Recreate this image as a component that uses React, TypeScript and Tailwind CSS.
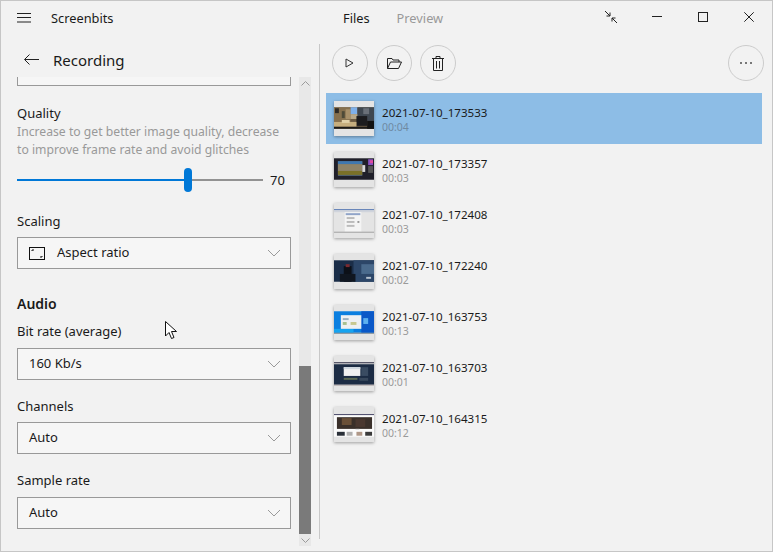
import React from "react";

const Chevron = () => (
  <svg width="14" height="8" viewBox="0 0 14 8" className="shrink-0" fill="none" stroke="#9a9a9a" strokeWidth="1">
    <path d="M1 1l6 6 6-6" />
  </svg>
);

function Select({ label, icon }: { label: string; icon?: boolean }) {
  return (
    <div className="flex h-8 w-[274px] items-center border border-[#999999] bg-[#f6f6f6] pl-[11px] pr-[9px]">
      {icon && (
        <svg width="17" height="13" viewBox="0 0 17 13" fill="none" className="mr-[11px] shrink-0" stroke="#111">
          <rect x="0.5" y="0.5" width="15" height="12" />
          <path d="M3 4V3h2M13 9v1h-2" />
        </svg>
      )}
      <span className="mb-[2px] flex-1 text-[13px] leading-none text-[#1a1a1a]">{label}</span>
      <Chevron />
    </div>
  );
}

function Label({ children, className = "" }: { children: React.ReactNode; className?: string }) {
  return <div className={"h-[18px] text-[13px] leading-[18px] text-[#1a1a1a] " + className}>{children}</div>;
}

function RoundBtn({ children, className = "" }: { children: React.ReactNode; className?: string }) {
  return (
    <button className={"flex h-9 w-9 items-center justify-center rounded-full border border-[#cccccc] " + className}>
      {children}
    </button>
  );
}

type T = { name: string; dur: string; art: React.ReactNode };

const Thumb = ({ art }: { art: React.ReactNode }) => (
  <div className="h-[35px] w-[40px] shrink-0 bg-[#e4e4e4] shadow-[0_1px_3px_rgba(0,0,0,0.35)]">
    <svg width="40" height="35" viewBox="0 0 41 35" className="block blur-[0.4px]">
      {art}
    </svg>
  </div>
);

const items: T[] = [
  {
    name: "2021-07-10_173533",
    dur: "00:04",
    art: (
      <>
        <rect y="6" width="41" height="22" fill="#6b5a42" />
        <rect x="0" y="6" width="17" height="15" fill="#86704e" />
        <rect x="1" y="7" width="4" height="5" fill="#2e2a26" />
        <rect x="8" y="10" width="3" height="7" fill="#4e4a38" />
        <rect x="12" y="8" width="5" height="10" fill="#a8906a" />
        <rect x="17" y="6" width="7" height="7" fill="#7eb0ea" />
        <rect x="17" y="13" width="8" height="5" fill="#b8a98a" />
        <rect x="24" y="6" width="17" height="14" fill="#3f4750" />
        <rect x="30" y="7" width="6" height="6" fill="#6a7078" />
        <rect x="23" y="15" width="11" height="10" fill="#1c1c1e" />
        <rect x="0" y="21" width="23" height="5" fill="#c6ae7e" />
        <rect x="8" y="19" width="8" height="3" fill="#e0d0a8" />
        <rect x="0" y="26" width="41" height="2" fill="#1c1a18" />
        <rect x="34" y="20" width="7" height="8" fill="#121212" />
      </>
    ),
  },
  {
    name: "2021-07-10_173357",
    dur: "00:03",
    art: (
      <>
        <rect y="6" width="41" height="22" fill="#20202a" />
        <rect x="4" y="9" width="25" height="15" fill="#5a6a78" />
        <rect x="4" y="9" width="25" height="3" fill="#3f78b0" />
        <rect x="4" y="12" width="25" height="7" fill="#8f8468" />
        <rect x="4" y="19" width="25" height="4" fill="#7a7028" />
        <rect x="29" y="13" width="3" height="7" fill="#d8d8d8" />
        <rect x="35" y="7" width="5" height="6" fill="#8a50c0" />
        <rect x="37" y="8" width="3" height="3" fill="#e04aa0" />
        <rect x="35" y="14" width="5" height="7" fill="#555" />
      </>
    ),
  },
  {
    name: "2021-07-10_172408",
    dur: "00:03",
    art: (
      <>
        <rect y="6" width="41" height="1" fill="#3a62a8" />
        <rect y="7" width="41" height="2" fill="#d0d4dc" />
        <rect x="11" y="9" width="17" height="20" fill="#f4f4f4" />
        <rect x="12" y="10" width="15" height="2" fill="#90a4c8" />
        <rect x="13" y="14" width="8" height="2" fill="#bbb" />
        <rect x="13" y="18" width="8" height="2" fill="#bbb" />
        <rect x="13" y="22" width="8" height="2" fill="#bbb" />
        <rect x="24" y="18" width="2" height="2" fill="#999" />
        <rect y="29" width="41" height="1" fill="#a0a0a0" />
      </>
    ),
  },
  {
    name: "2021-07-10_172240",
    dur: "00:02",
    art: (
      <>
        <rect y="6" width="41" height="22" fill="#1a2d48" />
        <rect x="20" y="6" width="21" height="22" fill="#2c4668" />
        <rect x="28" y="10" width="13" height="10" fill="#4a6a8c" />
        <rect x="10" y="12" width="8" height="16" fill="#0c1018" />
        <rect x="12" y="10" width="4" height="3" fill="#7a2a30" />
        <rect x="6" y="20" width="16" height="8" fill="#101620" />
        <rect x="33" y="23" width="5" height="2" fill="#b8c4d0" />
      </>
    ),
  },
  {
    name: "2021-07-10_163753",
    dur: "00:13",
    art: (
      <>
        <rect y="6" width="41" height="22" fill="#0b7fe0" />
        <rect x="28" y="6" width="13" height="22" fill="#0a58c8" />
        <rect y="24" width="20" height="4" fill="#16a4f0" />
        <rect x="7" y="10" width="21" height="14" fill="#eef0f2" />
        <rect x="9" y="13" width="6" height="2" fill="#9ab0c0" />
        <rect x="9" y="17" width="4" height="3" fill="#a8c090" />
        <rect x="17" y="17" width="6" height="3" fill="#c8c890" />
        <rect x="30" y="13" width="5" height="6" fill="#5cb0f0" />
        <rect y="28" width="41" height="1" fill="#70808c" />
      </>
    ),
  },
  {
    name: "2021-07-10_163703",
    dur: "00:01",
    art: (
      <>
        <rect y="6" width="41" height="1" fill="#202038" />
        <rect y="8" width="41" height="21" fill="#1c2c44" />
        <rect x="10" y="11" width="17" height="9" fill="#f0f0f0" />
        <rect x="10" y="11" width="17" height="2" fill="#d0d8e0" />
        <rect x="28" y="11" width="7" height="9" fill="#3a4c62" />
        <rect x="10" y="22" width="14" height="2" fill="#5c6a54" />
        <rect x="26" y="22" width="9" height="3" fill="#38485c" />
        <rect y="29" width="41" height="1" fill="#b0a8a8" />
      </>
    ),
  },
  {
    name: "2021-07-10_164315",
    dur: "00:12",
    art: (
      <>
        <rect y="7" width="41" height="1" fill="#22224a" />
        <rect y="8" width="41" height="22" fill="#fbfbfb" />
        <rect x="3" y="10" width="36" height="12" fill="#3a302a" />
        <rect x="8" y="11" width="10" height="7" fill="#6a5038" />
        <rect x="22" y="12" width="10" height="8" fill="#4a3830" />
        <rect x="22" y="22" width="4" height="1" fill="#ddd" />
        <rect x="3" y="25" width="8" height="4" fill="#2a3038" />
        <rect x="13" y="25" width="6" height="4" fill="#b0b0b0" />
        <rect x="23" y="25" width="6" height="4" fill="#b09888" />
        <rect x="32" y="25" width="7" height="4" fill="#3a3a3a" />
      </>
    ),
  },
];

export default function App() {
  return (
    <div
      className="relative flex h-[552px] w-[773px] flex-col overflow-hidden border border-[#c6c6c6] bg-[#f2f2f2] text-[#1a1a1a]"
      style={{ fontFamily: '"Noto Sans", "Open Sans", sans-serif' }}
    >
      {/* title bar */}
      <div className="flex h-[34px] shrink-0 items-center">
        <svg width="14" height="10" viewBox="0 0 14 10" className="ml-4 shrink-0" fill="none" stroke="#222">
          <path d="M0 .5h14M0 4.5h14M0 9h14" />
        </svg>
        <span className="ml-5 w-[292px] text-[12.8px] leading-none">Screenbits</span>
        <span className="text-[12.8px] leading-none">Files</span>
        <span className="ml-[27px] text-[12.8px] leading-none text-[#999999]">Preview</span>
        <div className="mb-[3px] ml-auto flex items-center pr-[18px]">
          <svg width="14" height="14" viewBox="0 0 14 14" fill="none" stroke="#222" className="mr-[34px]">
            <path d="M1 1l5 5M6 2.5V6H2.5M13 13L8 8M8 11.5V8h3.5" />
          </svg>
          <svg width="10" height="11" viewBox="0 0 10 11" fill="none" stroke="#222" className="mr-[36px]">
            <path d="M0 5.5h10" />
          </svg>
          <svg width="10" height="10" viewBox="0 0 10 10" fill="none" stroke="#222" className="mr-[36px]">
            <rect x="0.5" y="0.5" width="9" height="9" />
          </svg>
          <svg width="10" height="10" viewBox="0 0 10 10" fill="none" stroke="#222">
            <path d="M.3.3l9.4 9.4M9.7.3L.3 9.7" />
          </svg>
        </div>
      </div>

      {/* body */}
      <div className="flex min-h-0 flex-1">
        {/* left pane */}
        <div className="flex w-[318px] shrink-0 flex-col">
          <div className="flex h-[42px] shrink-0 items-center pl-[23px] pt-[6px]">
            <svg width="15" height="11" viewBox="0 0 15 11" fill="none" stroke="#222">
              <path d="M15 5.5H.8M5.5.5l-5 5 5 5" />
            </svg>
            <span className="ml-[14px] mt-[2px] text-[15px] leading-none">Recording</span>
          </div>
          <div className="flex min-h-0 flex-1">
            <div className="w-[298px] pl-4">
              <div className="h-[9px] w-[274px] border-x border-b border-[#999999] bg-[#f6f6f6]" />
              <Label className="mt-[18px]">Quality</Label>
              <div className="mt-[1px] w-[270px] text-[12.2px] leading-[18px] text-[#999999]">
                Increase to get better image quality, decrease to improve frame rate and avoid glitches
              </div>
              <div className="mt-[9px] flex h-6 items-center">
                <div className="relative h-[2px] w-[246px] bg-[#929292]">
                  <div className="h-full w-[170px] bg-[#0078d7]" />
                  <div className="absolute left-[167px] top-[-11px] h-6 w-2 rounded-full bg-[#0078d7]" />
                </div>
                <span className="ml-[7px] text-[13px] leading-none">70</span>
              </div>
              <Label className="mt-5">Scaling</Label>
              <div className="mt-[7px]">
                <Select label="Aspect ratio" icon />
              </div>
              <div className="mt-[25px] h-5 text-[14px] font-semibold leading-5">Audio</div>
              <Label className="mt-[8px]">Bit rate (average)</Label>
              <div className="mt-[8px]">
                <Select label="160 Kb/s" />
              </div>
              <Label className="mt-[17px]">Channels</Label>
              <div className="mt-[7px]">
                <Select label="Auto" />
              </div>
              <Label className="mt-[17px]">Sample rate</Label>
              <div className="mt-[8px]">
                <Select label="Auto" />
              </div>
            </div>
            {/* scrollbar */}
            <div className="mb-[5px] flex w-3 shrink-0 flex-col bg-[#e8e8e8]">
              <div className="flex h-3 items-center justify-center">
                <svg width="9" height="5" viewBox="0 0 9 5" fill="none" stroke="#9a9a9a">
                  <path d="M.5 4.5l4-4 4 4" />
                </svg>
              </div>
              <div className="flex-1" />
              <div className="h-[168px] bg-[#7a7a7a]" />
              <div className="flex h-3 items-center justify-center">
                <svg width="9" height="5" viewBox="0 0 9 5" fill="none" stroke="#9a9a9a">
                  <path d="M.5.5l4 4 4-4" />
                </svg>
              </div>
            </div>
          </div>
        </div>

        {/* divider */}
        <div className="mb-3 mt-[9px] w-px shrink-0 bg-[#c8c8c8]" />

        {/* right pane */}
        <div className="flex min-w-0 flex-1 flex-col">
          <div className="flex items-center pl-3 pr-2 pt-[10px]">
            <RoundBtn>
              <svg width="10" height="10" viewBox="0 0 10 10" fill="none" stroke="#333">
                <path d="M1 1v8l7-4z" />
              </svg>
            </RoundBtn>
            <RoundBtn className="ml-2">
              <svg width="15" height="12" viewBox="0 0 15 12" fill="none" stroke="#222">
                <path d="M.5 11.5V1.5h4.5l1 1.5h6V5M.5 11.5h11l3-6.5H3.5z" />
              </svg>
            </RoundBtn>
            <RoundBtn className="ml-2">
              <svg width="12" height="15" viewBox="0 0 12 15" fill="none" stroke="#222">
                <path d="M0 2.5h12M4 2.5V.5h4v2M1.5 2.5v12h9v-12M4.5 5v7.5M7.5 5v7.5" />
              </svg>
            </RoundBtn>
            <RoundBtn className="ml-auto">
              <svg width="12" height="2" viewBox="0 0 12 2" fill="#777">
                <rect x="0" y="0" width="2" height="2" />
                <rect x="5" y="0" width="2" height="2" />
                <rect x="10" y="0" width="2" height="2" />
              </svg>
            </RoundBtn>
          </div>
          <div className="ml-[6px] mr-[10px] mt-3 flex flex-col">
            {items.map((it, i) => (
              <div key={it.name} className={"flex h-[51px] items-center pl-2 " + (i === 0 ? "bg-[#8dbde6]" : "")}>
                <Thumb art={it.art} />
                <div className="ml-2 flex flex-col pt-[3px]">
                  <span className="text-[11.6px] leading-[14px] text-[#1a1a1a]">{it.name}</span>
                  <span className={"text-[10.5px] leading-[14px] " + (i === 0 ? "text-[#6f8aa3]" : "text-[#9a9a9a]")}>
                    {it.dur}
                  </span>
                </div>
              </div>
            ))}
          </div>
        </div>
      </div>

      {/* mouse cursor */}
      <svg width="13" height="19" viewBox="0 0 13 19" className="absolute left-[164px] top-[320px]" fill="#fff" stroke="#111">
        <path d="M.5.5v14.5l3.5-3.5 2.5 6 2.5-1-2.5-6h5z" />
      </svg>
    </div>
  );
}
